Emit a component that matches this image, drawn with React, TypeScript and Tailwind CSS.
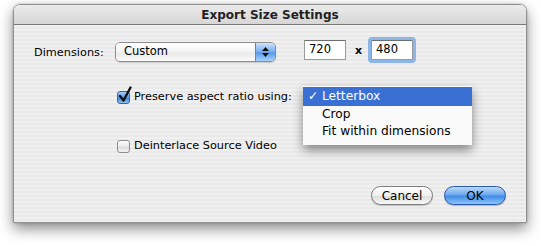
const font = { fontFamily: '"DejaVu Sans", "Noto Sans", sans-serif' };

const Checkbox = ({ checked }: { checked?: boolean }) => (
  <div className="relative w-[13px] h-[13px] shrink-0">
    <div
      className={
        checked
          ? 'w-[13px] h-[13px] rounded-[3px] border border-[#3a64a8] bg-[linear-gradient(#a8cbf3,#5f9ee8_50%,#3d86e0_55%,#8fc0f5)]'
          : 'w-[13px] h-[13px] rounded-[3px] border border-[#8d8d8d] bg-[linear-gradient(#ffffff,#e8e8e8_50%,#dcdcdc_55%,#f5f5f5)]'
      }
    />
    {checked && (
      <svg className="absolute left-[1px] top-[-5px]" width="14" height="17" viewBox="0 0 14 17">
        <path d="M2 10 L5.5 14.5 L12.5 1.5" fill="none" stroke="#111" strokeWidth="2.4" strokeLinecap="round" strokeLinejoin="round" />
      </svg>
    )}
  </div>
);

const PopupButton = () => (
  <div className="flex w-[161px] h-[20px] mt-[2px] rounded-[5px] border border-[#8c8c8c] overflow-hidden shadow-[0_1px_1px_rgba(0,0,0,0.15)]">
    <div className="flex-1 flex items-center pl-[8px] text-[11.5px] text-black bg-[linear-gradient(#ffffff,#f3f3f3_50%,#e9e9e9_55%,#fbfbfb)]">
      Custom
    </div>
    <div className="w-[20px] flex flex-col items-center justify-center gap-[2px] border-l border-[#5a86c4] bg-[linear-gradient(#cfe3fb,#7fb2f0_45%,#5c9be8_55%,#a8d2fb)]">
      <svg width="7" height="4" viewBox="0 0 7 4"><path d="M0 4 L3.5 0 L7 4 Z" fill="#111" /></svg>
      <svg width="7" height="4" viewBox="0 0 7 4"><path d="M0 0 L3.5 4 L7 0 Z" fill="#111" /></svg>
    </div>
  </div>
);

const TextField = ({ value, focused }: { value: string; focused?: boolean }) => (
  <div
    className={
      'w-[42px] h-[20px] flex items-center pl-[4px] text-[11.5px] bg-white border border-[#9a9a9a] border-t-[#6e6e6e] ' +
      (focused ? 'outline outline-[3px] outline-[#8db6e6] rounded-[1px]' : '')
    }
  >
    {value}
  </div>
);

export default function App() {
  return (
    <div className="w-[541px] h-[246px] bg-white pt-[4px] pl-[13px]" style={font}>
      <div className="w-[514px] h-[219px] flex flex-col rounded-t-[7px] border border-[#8f8f8f] shadow-[0_6px_14px_rgba(0,0,0,0.45),0_0_3px_rgba(0,0,0,0.2)] overflow-hidden">
        <div className="h-[20px] shrink-0 flex items-center justify-center border-b border-[#7a7a7a] bg-[linear-gradient(#ebebeb,#d6d6d6)] text-[12px] font-bold text-[#222]">
          Export Size Settings
        </div>
        <div className="relative flex-1 flex flex-col bg-[repeating-linear-gradient(180deg,#f0f0f0_0px,#f0f0f0_2px,#e9e9e9_2px,#e9e9e9_4px)] text-[11.3px] text-black">
          <div className="flex items-start h-[22px] mt-[15px]">
            <span className="w-[101px] pl-[20px] mt-[5px]">Dimensions:</span>
            <PopupButton />
            <div className="w-[28px]" />
            <TextField value="720" />
            <span className="w-[25px] text-center font-bold text-[11px] mt-[3px]">x</span>
            <TextField value="480" focused />
          </div>

          <div className="flex items-center gap-[4px] ml-[103px] mt-[27px]">
            <Checkbox checked />
            <span>Preserve aspect ratio using:</span>
          </div>

          <div className="flex items-center gap-[4px] ml-[103px] mt-[32px]">
            <Checkbox />
            <span>Deinterlace Source Video</span>
          </div>

          <div className="flex justify-end gap-[11px] pr-[20px] mt-[31px]">
            <button className="w-[62px] h-[19px] rounded-full border border-[#7d7d7d] bg-[linear-gradient(#ffffff,#f0f0f0_50%,#dedede_55%,#f8f8f8)] text-[12px] shadow-[0_1px_1px_rgba(0,0,0,0.2)]">
              Cancel
            </button>
            <button className="w-[62px] h-[19px] rounded-full border border-[#2a58a8] bg-[linear-gradient(#bcd9fa,#69a6ef_48%,#3e8ae6_52%,#8cc4fb)] text-[12px] shadow-[0_1px_1px_rgba(0,0,0,0.25)]">
              OK
            </button>
          </div>

          <span className="absolute left-[294px] top-[88px] text-[#c4c4c4]">(if required)</span>

          <div className="absolute left-[289px] top-[61px] w-[169px] py-[1px] bg-[rgba(250,250,250,0.94)] shadow-[0_5px_10px_rgba(0,0,0,0.45)] text-[12.2px]">
            <div className="h-[19px] flex items-center bg-[#3a70d3] text-white pl-[5px]">
              <span className="w-[14px]">✓</span>Letterbox
            </div>
            <div className="h-[17px] flex items-center pl-[19px]">Crop</div>
            <div className="h-[17px] flex items-center pl-[19px]">Fit within dimensions</div>
            <div className="h-[4px]" />
          </div>
        </div>
      </div>
    </div>
  );
}
